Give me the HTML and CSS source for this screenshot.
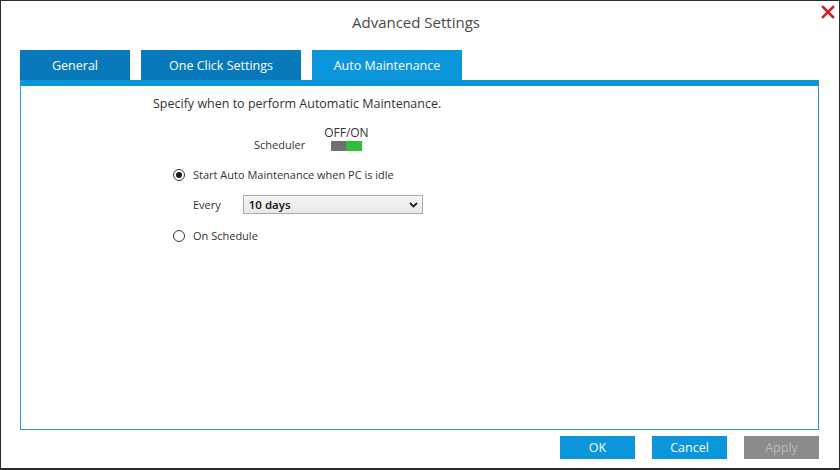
FILE: index.html
```html
<!DOCTYPE html>
<html>
<head>
<meta charset="utf-8">
<link rel="stylesheet" href="styles.css">
</head>
<body>
<div class="window">
  <header class="titlebar">
    <h1 class="title">Advanced Settings</h1>
    <button class="close" aria-label="Close">
      <svg width="14" height="14" viewBox="0 0 14 14"><path d="M2 2 L12 12 M12 2 L2 12" stroke="#d0201f" stroke-width="2.6" stroke-linecap="square"/></svg>
    </button>
  </header>
  <nav class="tabs">
    <div class="tab tab-general">General</div>
    <div class="tab tab-oneclick">One Click Settings</div>
    <div class="tab tab-active">Auto Maintenance</div>
  </nav>
  <section class="panel">
    <p class="intro">Specify when to perform Automatic Maintenance.</p>
    <div class="sched">
      <span class="sched-label">Scheduler</span>
      <div class="sched-switch">
        <span class="offon">OFF/ON</span>
        <span class="toggle"><span class="toggle-off"></span><span class="toggle-on"></span></span>
      </div>
    </div>
    <label class="radio-row row-idle">
      <span class="radio checked"></span>
      <span>Start Auto Maintenance when PC is idle</span>
    </label>
    <div class="every-row">
      <span class="every-label">Every</span>
      <div class="select">
        <span class="select-value">10 days</span>
        <svg class="chev" width="9" height="6" viewBox="0 0 9 6"><path d="M1 1 L4.5 4.5 L8 1" stroke="#222" stroke-width="1.8" fill="none"/></svg>
      </div>
    </div>
    <label class="radio-row row-sched">
      <span class="radio"></span>
      <span>On Schedule</span>
    </label>
  </section>
  <footer class="footer">
    <button class="btn">OK</button>
    <button class="btn">Cancel</button>
    <button class="btn btn-disabled">Apply</button>
  </footer>
</div>
</body>
</html>
```
FILE: styles.css
```css
* { box-sizing: border-box; }
html, body { margin: 0; padding: 0; }
body { width: 840px; height: 470px; background: #fff; font-family: "Open Sans", "Noto Sans", sans-serif; }

.window {
  width: 840px;
  height: 470px;
  border: 1px solid #2b2b2b;
  border-bottom-width: 2px;
  background: #fff;
  display: flex;
  flex-direction: column;
  position: relative;
}

.titlebar {
  height: 49px;
  display: flex;
  justify-content: center;
  align-items: flex-start;
}
.title {
  margin: 11px 0 0 -8px;
  font-size: 15px;
  font-weight: 400;
  color: #4a4a4a;
  line-height: 20px;
}
.close {
  position: absolute;
  top: 3px;
  right: 3px;
  width: 16px;
  height: 16px;
  padding: 0;
  border: 0;
  background: transparent;
  display: flex;
  align-items: center;
  justify-content: center;
}

.tabs {
  display: flex;
  gap: 11px;
  margin-left: 19px;
  height: 30px;
}
.tab {
  height: 30px;
  display: flex;
  align-items: center;
  justify-content: center;
  color: #fff;
  font-size: 12.5px;
  background: #0879ba;
}
.tab-general { width: 110px; }
.tab-oneclick { width: 160px; }
.tab-active { width: 150px; background: #0b96db; }

.panel {
  margin-left: 19px;
  width: 799px;
  height: 350px;
  border: 1px solid #2a92d8;
  border-top: 6px solid #0b96db;
  padding: 8px 0 0 132px;
  color: #333;
  font-size: 11px;
}
.intro {
  margin: 0;
  font-size: 12.5px;
  line-height: 20px;
  color: #333;
}
.sched {
  display: flex;
  align-items: flex-end;
  margin: 11px 0 0 101px;
  gap: 19px;
}
.sched-label { line-height: 16px; margin-bottom: -2px; }
.sched-switch {
  display: flex;
  flex-direction: column;
  align-items: center;
  gap: 0;
}
.offon { line-height: 16px; font-size: 12px; }
.toggle {
  display: flex;
  width: 31px;
  height: 10px;
}
.toggle-off { flex: 1; background: #6e6e73; }
.toggle-on { flex: 1; background: #2fbf3a; }

.radio-row {
  display: flex;
  align-items: center;
  gap: 8px;
  margin-left: 20px;
  line-height: 16px;
}
.row-idle { margin-top: 16px; }
.radio {
  width: 12px;
  height: 12px;
  border: 1px solid #333;
  border-radius: 50%;
  background: #fff;
  position: relative;
}
.radio.checked::after {
  content: "";
  position: absolute;
  left: 2px;
  top: 2px;
  width: 6px;
  height: 6px;
  border-radius: 50%;
  background: #1a1a1a;
}

.every-row {
  display: flex;
  align-items: center;
  margin: 12px 0 0 40px;
  gap: 22px;
}
.select {
  width: 180px;
  height: 19px;
  border: 1px solid #acacac;
  background: linear-gradient(#f4f4f4, #e8e8e8);
  display: flex;
  align-items: center;
  justify-content: space-between;
  padding: 0 4px 0 5px;
}
.select-value { color: #111; font-weight: 600; font-size: 11.5px; }
.row-sched { margin-top: 14px; }

.footer {
  display: flex;
  justify-content: flex-end;
  gap: 17px;
  padding: 6px 20px 0 0;
}
.btn {
  width: 75px;
  height: 23px;
  border: 0;
  background: #0b96db;
  color: #fff;
  font-family: inherit;
  font-size: 12.5px;
  padding: 0;
}
.btn-disabled { background: #8a8b8d; color: #b8b9bb; }
```
